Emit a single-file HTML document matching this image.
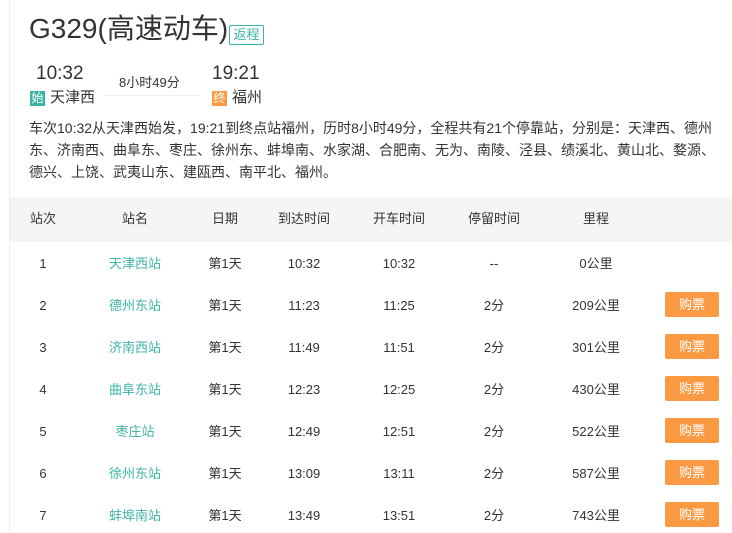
<!DOCTYPE html>
<html><head><meta charset="utf-8"><style>
*{margin:0;padding:0;box-sizing:border-box}
body{width:732px;height:533px;overflow:hidden;background:#fff;font-family:"Liberation Sans","Noto Sans CJK SC",sans-serif;color:#333;position:relative}
.lb{position:absolute;left:9px;top:0;width:1px;height:533px;background:#eee}
.t{position:absolute;left:29px;top:11px;font-size:28px;line-height:36px;color:#333;white-space:nowrap}
.fc{position:absolute;left:229px;top:25px;width:35px;height:20px;border:1px solid #3cb4a5;color:#3cb4a5;font-size:13px;line-height:18px;text-align:center;border-radius:2px}
.tm{position:absolute;top:63px;font-size:19px;line-height:22px;color:#333}
.dur{position:absolute;left:119px;top:75px;font-size:13px;line-height:16px}
.dl{position:absolute;left:104px;top:95px;width:96px;height:1px;background:#eee}
.bd{position:absolute;top:91px;width:15px;height:15px;color:#fff;font-size:12px;line-height:15px;text-align:center}
.st{position:absolute;top:89px;font-size:15px;line-height:18px}
.p{position:absolute;left:29px;top:117px;width:700px;font-size:14px;line-height:22px;color:#333;white-space:nowrap}
.hd{position:absolute;left:10px;top:197px;width:722px;height:45px;background:#f5f5f5}
.c{position:absolute;font-size:13px;line-height:16px;transform:translateX(-50%);white-space:nowrap}
.g{color:#3cb4a5}
.btn{position:absolute;left:665px;width:54px;height:25px;background:#fb9a43;color:#fff;font-size:13px;line-height:25px;text-align:center;border-radius:2px}
</style></head><body>
<div class="lb"></div>
<div class="t">G329(高速动车)</div>
<div class="fc">返程</div>
<div class="tm" style="left:36px">10:32</div>
<div class="tm" style="left:212px">19:21</div>
<div class="dur">8小时49分</div>
<div class="dl"></div>
<div class="bd" style="left:30px;background:#3cb4a5">始</div>
<div class="st" style="left:50px">天津西</div>
<div class="bd" style="left:212px;background:#fb9a43">终</div>
<div class="st" style="left:232px">福州</div>
<div class="p">车次10:32从天津西始发，19:21到终点站福州，历时8小时49分，全程共有21个停靠站，分别是：天津西、德州<br>东、济南西、曲阜东、枣庄、徐州东、蚌埠南、水家湖、合肥南、无为、南陵、泾县、绩溪北、黄山北、婺源、<br>德兴、上饶、武夷山东、建瓯西、南平北、福州。</div>
<div class="hd"></div>
<div class="c" style="left:43px;top:211px">站次</div>
<div class="c" style="left:135px;top:211px">站名</div>
<div class="c" style="left:225px;top:211px">日期</div>
<div class="c" style="left:304px;top:211px">到达时间</div>
<div class="c" style="left:399px;top:211px">开车时间</div>
<div class="c" style="left:494px;top:211px">停留时间</div>
<div class="c" style="left:596px;top:211px">里程</div>

<div class="c" style="left:43px;top:256px">1</div><div class="c g" style="left:135px;top:256px">天津西站</div><div class="c" style="left:225px;top:256px">第1天</div><div class="c" style="left:304px;top:256px">10:32</div><div class="c" style="left:399px;top:256px">10:32</div><div class="c" style="left:494px;top:256px">--</div><div class="c" style="left:596px;top:256px">0公里</div>

<div class="c" style="left:43px;top:298px">2</div><div class="c g" style="left:135px;top:298px">德州东站</div><div class="c" style="left:225px;top:298px">第1天</div><div class="c" style="left:304px;top:298px">11:23</div><div class="c" style="left:399px;top:298px">11:25</div><div class="c" style="left:494px;top:298px">2分</div><div class="c" style="left:596px;top:298px">209公里</div><div class="btn" style="top:292px">购票</div>

<div class="c" style="left:43px;top:340px">3</div><div class="c g" style="left:135px;top:340px">济南西站</div><div class="c" style="left:225px;top:340px">第1天</div><div class="c" style="left:304px;top:340px">11:49</div><div class="c" style="left:399px;top:340px">11:51</div><div class="c" style="left:494px;top:340px">2分</div><div class="c" style="left:596px;top:340px">301公里</div><div class="btn" style="top:334px">购票</div>

<div class="c" style="left:43px;top:382px">4</div><div class="c g" style="left:135px;top:382px">曲阜东站</div><div class="c" style="left:225px;top:382px">第1天</div><div class="c" style="left:304px;top:382px">12:23</div><div class="c" style="left:399px;top:382px">12:25</div><div class="c" style="left:494px;top:382px">2分</div><div class="c" style="left:596px;top:382px">430公里</div><div class="btn" style="top:376px">购票</div>

<div class="c" style="left:43px;top:424px">5</div><div class="c g" style="left:135px;top:424px">枣庄站</div><div class="c" style="left:225px;top:424px">第1天</div><div class="c" style="left:304px;top:424px">12:49</div><div class="c" style="left:399px;top:424px">12:51</div><div class="c" style="left:494px;top:424px">2分</div><div class="c" style="left:596px;top:424px">522公里</div><div class="btn" style="top:418px">购票</div>

<div class="c" style="left:43px;top:466px">6</div><div class="c g" style="left:135px;top:466px">徐州东站</div><div class="c" style="left:225px;top:466px">第1天</div><div class="c" style="left:304px;top:466px">13:09</div><div class="c" style="left:399px;top:466px">13:11</div><div class="c" style="left:494px;top:466px">2分</div><div class="c" style="left:596px;top:466px">587公里</div><div class="btn" style="top:460px">购票</div>

<div class="c" style="left:43px;top:508px">7</div><div class="c g" style="left:135px;top:508px">蚌埠南站</div><div class="c" style="left:225px;top:508px">第1天</div><div class="c" style="left:304px;top:508px">13:49</div><div class="c" style="left:399px;top:508px">13:51</div><div class="c" style="left:494px;top:508px">2分</div><div class="c" style="left:596px;top:508px">743公里</div><div class="btn" style="top:502px">购票</div>
</body></html>
